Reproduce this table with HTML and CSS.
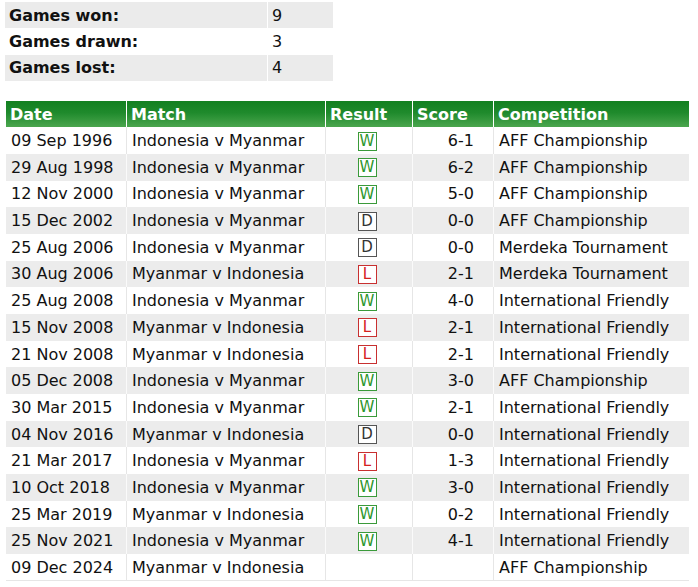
FILE: index.html
```html
<!DOCTYPE html>
<html>
<head>
<meta charset="utf-8">
<link rel="stylesheet" href="styles.css">
</head>
<body>
<table class="summary">
  <tr class="alt"><th>Games won:</th><td>9</td></tr>
  <tr><th>Games drawn:</th><td>3</td></tr>
  <tr class="alt"><th>Games lost:</th><td>4</td></tr>
</table>

<table class="results">
  <colgroup>
    <col class="c-date"><col class="c-match"><col class="c-res"><col class="c-score"><col class="c-comp">
  </colgroup>
  <thead>
    <tr><th>Date</th><th>Match</th><th>Result</th><th>Score</th><th>Competition</th></tr>
  </thead>
  <tbody>
    <tr><td>09 Sep 1996</td><td>Indonesia v Myanmar</td><td class="res"><span class="badge w">W</span></td><td class="score">6-1</td><td>AFF Championship</td></tr>
    <tr class="alt"><td>29 Aug 1998</td><td>Indonesia v Myanmar</td><td class="res"><span class="badge w">W</span></td><td class="score">6-2</td><td>AFF Championship</td></tr>
    <tr><td>12 Nov 2000</td><td>Indonesia v Myanmar</td><td class="res"><span class="badge w">W</span></td><td class="score">5-0</td><td>AFF Championship</td></tr>
    <tr class="alt"><td>15 Dec 2002</td><td>Indonesia v Myanmar</td><td class="res"><span class="badge d">D</span></td><td class="score">0-0</td><td>AFF Championship</td></tr>
    <tr><td>25 Aug 2006</td><td>Indonesia v Myanmar</td><td class="res"><span class="badge d">D</span></td><td class="score">0-0</td><td>Merdeka Tournament</td></tr>
    <tr class="alt"><td>30 Aug 2006</td><td>Myanmar v Indonesia</td><td class="res"><span class="badge l">L</span></td><td class="score">2-1</td><td>Merdeka Tournament</td></tr>
    <tr><td>25 Aug 2008</td><td>Indonesia v Myanmar</td><td class="res"><span class="badge w">W</span></td><td class="score">4-0</td><td>International Friendly</td></tr>
    <tr class="alt"><td>15 Nov 2008</td><td>Myanmar v Indonesia</td><td class="res"><span class="badge l">L</span></td><td class="score">2-1</td><td>International Friendly</td></tr>
    <tr><td>21 Nov 2008</td><td>Myanmar v Indonesia</td><td class="res"><span class="badge l">L</span></td><td class="score">2-1</td><td>International Friendly</td></tr>
    <tr class="alt"><td>05 Dec 2008</td><td>Indonesia v Myanmar</td><td class="res"><span class="badge w">W</span></td><td class="score">3-0</td><td>AFF Championship</td></tr>
    <tr><td>30 Mar 2015</td><td>Indonesia v Myanmar</td><td class="res"><span class="badge w">W</span></td><td class="score">2-1</td><td>International Friendly</td></tr>
    <tr class="alt"><td>04 Nov 2016</td><td>Myanmar v Indonesia</td><td class="res"><span class="badge d">D</span></td><td class="score">0-0</td><td>International Friendly</td></tr>
    <tr><td>21 Mar 2017</td><td>Indonesia v Myanmar</td><td class="res"><span class="badge l">L</span></td><td class="score">1-3</td><td>International Friendly</td></tr>
    <tr class="alt"><td>10 Oct 2018</td><td>Indonesia v Myanmar</td><td class="res"><span class="badge w">W</span></td><td class="score">3-0</td><td>International Friendly</td></tr>
    <tr><td>25 Mar 2019</td><td>Myanmar v Indonesia</td><td class="res"><span class="badge w">W</span></td><td class="score">0-2</td><td>International Friendly</td></tr>
    <tr class="alt"><td>25 Nov 2021</td><td>Indonesia v Myanmar</td><td class="res"><span class="badge w">W</span></td><td class="score">4-1</td><td>International Friendly</td></tr>
    <tr><td>09 Dec 2024</td><td>Myanmar v Indonesia</td><td class="res"></td><td class="score"></td><td>AFF Championship</td></tr>
  </tbody>
</table>
</body>
</html>
```

FILE: styles.css
```css
html, body {
  margin: 0;
  padding: 0;
  background: #fff;
}
body {
  padding: 2px 0 0 5px;
  font-family: "DejaVu Sans", Verdana, sans-serif;
  font-size: 16px;
  color: #111;
}
table {
  border-collapse: separate;
  border-spacing: 0;
}

/* summary table */
.summary {
  width: 328px;
}
.summary th,
.summary td {
  height: 26.4px;
  padding: 0 4px;
  box-sizing: border-box;
  text-align: left;
  vertical-align: middle;
  font-size: 16px;
}
.summary th {
  width: 263px;
  font-weight: bold;
  border-right: 1px solid #fff;
}
.summary tr.alt th,
.summary tr.alt td {
  background: #ebebeb;
}

/* results table */
.results {
  margin-top: 20px;
  margin-left: 1px;
  width: 683px;
  table-layout: fixed;
}
.c-date { width: 121px; }
.c-match { width: 199px; }
.c-res { width: 87px; }
.c-score { width: 81px; }
.c-comp { width: 195px; }

.results th {
  height: 26px;
  padding: 0 4px;
  text-align: left;
  color: #fff;
  font-weight: bold;
  font-size: 16px;
  background: linear-gradient(to bottom, #128020 0%, #1f8a2c 45%, #4ba64e 100%);
  border-right: 1px solid #fff;
}
.results th:last-child {
  border-right: none;
}
.results td {
  height: 26.7px;
  box-sizing: border-box;
  padding: 0 4px 0 5px;
  white-space: nowrap;
  vertical-align: middle;
  border-right: 1px solid #e6e6e6;
}
.results td:last-child {
  border-right: none;
}
.results tr.alt td {
  background: #ececec;
  border-right-color: #fafafa;
}
.results tr.alt td:last-child {
  border-right: none;
}
.results tbody tr:last-child td {
  border-bottom: 1px solid #e6e6e6;
}
.results td.res {
  text-align: center;
  padding: 0 4px 0 0;
}
.results td.score {
  text-align: right;
  padding-right: 19px;
}

.badge {
  display: inline-block;
  width: 19px;
  height: 19px;
  line-height: 17px;
  box-sizing: border-box;
  border: 1px solid;
  text-align: center;
  font-size: 15px;
  vertical-align: middle;
  background: #fff;
}
.badge.w { color: #2c962c; border-color: #3a9a3a; }
.badge.d { color: #333; border-color: #555; }
.badge.l { color: #d42020; border-color: #c83030; }
```
